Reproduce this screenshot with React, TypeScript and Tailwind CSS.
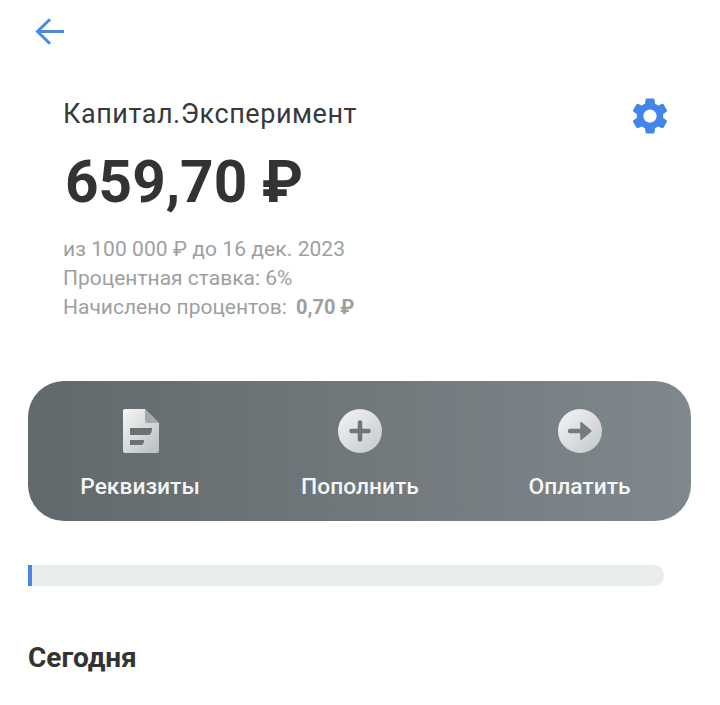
const gearPath =
  "M19.14 12.94c.04-.3.06-.61.06-.94 0-.32-.02-.64-.07-.94l2.03-1.58c.18-.14.23-.41.12-.61l-1.92-3.32c-.12-.22-.37-.29-.59-.22l-2.39.96c-.5-.38-1.03-.7-1.62-.94l-.36-2.54c-.04-.24-.24-.41-.48-.41h-3.84c-.24 0-.43.17-.47.41l-.36 2.54c-.59.24-1.13.57-1.62.94l-2.39-.96c-.22-.08-.47 0-.59.22L2.74 8.87c-.12.21-.08.47.12.61l2.03 1.58c-.05.3-.09.63-.09.94s.02.64.07.94l-2.03 1.58c-.18.14-.23.41-.12.61l1.92 3.32c.12.22.37.29.59.22l2.39-.96c.5.38 1.03.7 1.62.94l.36 2.54c.05.24.24.41.48.41h3.84c.24 0 .44-.17.47-.41l.36-2.54c.59-.24 1.13-.56 1.62-.94l2.39.96c.22.08.47 0 .59-.22l1.92-3.32c.12-.22.07-.47-.12-.61l-2.01-1.58zM12 15.6c-1.98 0-3.6-1.62-3.6-3.6s1.62-3.6 3.6-3.6 3.6 1.62 3.6 3.6-1.62 3.6-3.6 3.6z"

function DocIcon() {
  return (
    <svg width="36" height="44" viewBox="0 0 36 44" className="block ml-[2px]">
      <defs>
        <linearGradient id="doc" x1="0" y1="0" x2="1" y2="1">
          <stop offset="0" stopColor="#f6f7f7" />
          <stop offset="1" stopColor="#b9bdbe" />
        </linearGradient>
      </defs>
      <path d="M2 0H22L36 14V42a2 2 0 0 1-2 2H2a2 2 0 0 1-2-2V2a2 2 0 0 1 2-2z" fill="url(#doc)" />
      <path d="M22 0L36 14H24a2 2 0 0 1-2-2z" fill="#a4a8aa" />
      <path d="M7 19H29C29 23 28 26 25 26H7z" fill="#6a7074" />
      <path d="M7 31H21C21 34 20 36 18 36H7z" fill="#6a7074" />
    </svg>
  )
}

function PlusIcon() {
  return (
    <svg width="44" height="44" viewBox="0 0 44 44" className="block">
      <defs>
        <linearGradient id="plus" x1="0" y1="0" x2="1" y2="1">
          <stop offset="0" stopColor="#f4f5f5" />
          <stop offset="1" stopColor="#c4c8c9" />
        </linearGradient>
      </defs>
      <circle cx="22" cy="22" r="22" fill="url(#plus)" />
      <path d="M22 13.5V30.5M13.5 22H30.5" stroke="#6f7679" strokeWidth="4.5" strokeLinecap="round" />
    </svg>
  )
}

function ArrowIcon() {
  return (
    <svg width="44" height="44" viewBox="0 0 44 44" className="block">
      <defs>
        <linearGradient id="arrow" x1="0" y1="0" x2="1" y2="1">
          <stop offset="0" stopColor="#f4f5f5" />
          <stop offset="1" stopColor="#c4c8c9" />
        </linearGradient>
      </defs>
      <circle cx="22" cy="22" r="22" fill="url(#arrow)" />
      <path d="M12 22H28" stroke="#747b7e" strokeWidth="4.5" strokeLinecap="round" />
      <path d="M23 13.5L33 22L23 30.5z" fill="#747b7e" stroke="#747b7e" strokeWidth="1.5" strokeLinejoin="round" />
    </svg>
  )
}

const actions = [
  { label: "Реквизиты", icon: <DocIcon />, width: "w-[224px]" },
  { label: "Пополнить", icon: <PlusIcon />, width: "w-[216px]" },
  { label: "Оплатить", icon: <ArrowIcon />, width: "w-[223px]" },
]

export default function App() {
  return (
    <main className="w-[720px] h-[705px] overflow-hidden bg-white font-['Roboto',sans-serif]">
      <div className="pl-[35px] pt-[18px]">
        <svg width="29" height="27" viewBox="0 0 29 27" fill="none" stroke="#4a8ae0" strokeWidth="3" className="block">
          <path d="M29 13.5H3" />
          <path d="M15 1.2L2.5 13.5L15 25.8" />
        </svg>
      </div>

      <section className="flex justify-between pl-[63px] pr-[48px] pt-[53px]">
        <div>
          <h2 className="text-[27px] leading-[32px] text-[#37393b] tracking-[0.55px]">Капитал.Эксперимент</h2>
          <p className="mt-[18px] ml-[2px] text-[58.5px] leading-[68px] font-bold text-[#333333]">659,70 ₽</p>
        </div>
        <svg width="44" height="44" viewBox="0 0 24 24" fill="#4286ea" className="block mt-[-4px]">
          <path d={gearPath} />
        </svg>
      </section>

      <section className="pl-[63px] pt-[19px] text-[21px] leading-[29px] text-[#9d9fa1]">
        <p className="tracking-[0.07px]">из 100 000 ₽ до 16 дек. 2023</p>
        <p>
          Процентная ставка: 6%
        </p>
        <p>
          Начислено процентов: <span className="ml-[4px] text-[20px] font-bold">0,70 ₽</span>
        </p>
      </section>

      <section className="ml-[28px] mt-[59px] flex w-[663px] h-[140px] rounded-[36px] bg-gradient-to-r from-[#62696d] to-[#7f888c]">
        {actions.map((a) => (
          <div key={a.label} className={`${a.width} flex flex-col items-center`}>
            <div className="h-[44px] mt-[28px]">{a.icon}</div>
            <span className="mt-[20px] text-[22.8px] leading-[28px] font-medium text-white/95">{a.label}</span>
          </div>
        ))}
      </section>

      <div className="ml-[28px] mt-[44px] w-[636px] h-[21px] rounded-r-full bg-[#e9eced] overflow-hidden">
        <div className="w-[4px] h-full bg-[#4a86e0]" />
      </div>

      <h3 className="ml-[28px] mt-[56px] text-[28px] leading-[32px] font-bold text-[#333333]">Сегодня</h3>
    </main>
  )
}
